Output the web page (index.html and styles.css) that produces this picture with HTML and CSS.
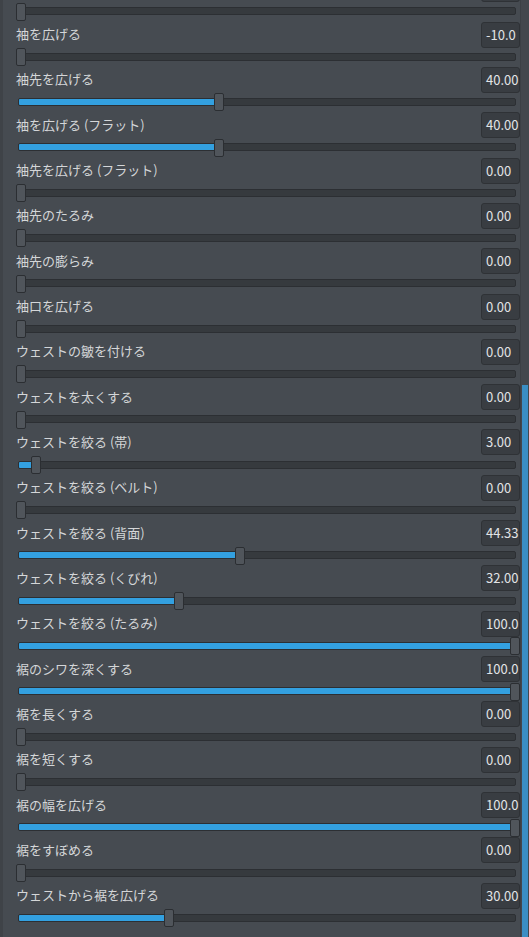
FILE: index.html
```html
<!DOCTYPE html>
<html lang="ja">
<head>
<meta charset="utf-8">
<link rel="stylesheet" href="styles.css">
</head>
<body>
<div class="window">
  <div class="panel">
    <div class="list">
      <div class="row"><div class="head"><span class="label"></span><span class="value"></span></div><div class="slider"><div class="track"><div class="fill" style="width:0px"></div></div><div class="handle" style="left:0px"></div></div></div>
      <div class="row"><div class="head"><span class="label">袖を広げる</span><span class="value">-10.0</span></div><div class="slider"><div class="track"><div class="fill" style="width:0px"></div></div><div class="handle" style="left:0px"></div></div></div>
      <div class="row"><div class="head"><span class="label">袖先を広げる</span><span class="value">40.00</span></div><div class="slider"><div class="track"><div class="fill" style="width:194.6px"></div></div><div class="handle" style="left:197.6px"></div></div></div>
      <div class="row"><div class="head"><span class="label">袖を広げる (フラット)</span><span class="value">40.00</span></div><div class="slider"><div class="track"><div class="fill" style="width:194.6px"></div></div><div class="handle" style="left:197.6px"></div></div></div>
      <div class="row"><div class="head"><span class="label">袖先を広げる (フラット)</span><span class="value">0.00</span></div><div class="slider"><div class="track"><div class="fill" style="width:0px"></div></div><div class="handle" style="left:0px"></div></div></div>
      <div class="row"><div class="head"><span class="label">袖先のたるみ</span><span class="value">0.00</span></div><div class="slider"><div class="track"><div class="fill" style="width:0px"></div></div><div class="handle" style="left:0px"></div></div></div>
      <div class="row"><div class="head"><span class="label">袖先の膨らみ</span><span class="value">0.00</span></div><div class="slider"><div class="track"><div class="fill" style="width:0px"></div></div><div class="handle" style="left:0px"></div></div></div>
      <div class="row"><div class="head"><span class="label">袖口を広げる</span><span class="value">0.00</span></div><div class="slider"><div class="track"><div class="fill" style="width:0px"></div></div><div class="handle" style="left:0px"></div></div></div>
      <div class="row"><div class="head"><span class="label">ウェストの皺を付ける</span><span class="value">0.00</span></div><div class="slider"><div class="track"><div class="fill" style="width:0px"></div></div><div class="handle" style="left:0px"></div></div></div>
      <div class="row"><div class="head"><span class="label">ウェストを太くする</span><span class="value">0.00</span></div><div class="slider"><div class="track"><div class="fill" style="width:0px"></div></div><div class="handle" style="left:0px"></div></div></div>
      <div class="row"><div class="head"><span class="label">ウェストを絞る (帯)</span><span class="value">3.00</span></div><div class="slider"><div class="track"><div class="fill" style="width:11.8px"></div></div><div class="handle" style="left:14.8px"></div></div></div>
      <div class="row"><div class="head"><span class="label">ウェストを絞る (ベルト)</span><span class="value">0.00</span></div><div class="slider"><div class="track"><div class="fill" style="width:0px"></div></div><div class="handle" style="left:0px"></div></div></div>
      <div class="row"><div class="head"><span class="label">ウェストを絞る (背面)</span><span class="value">44.33</span></div><div class="slider"><div class="track"><div class="fill" style="width:216px"></div></div><div class="handle" style="left:219px"></div></div></div>
      <div class="row"><div class="head"><span class="label">ウェストを絞る (くびれ)</span><span class="value">32.00</span></div><div class="slider"><div class="track"><div class="fill" style="width:155px"></div></div><div class="handle" style="left:158px"></div></div></div>
      <div class="row"><div class="head"><span class="label">ウェストを絞る (たるみ)</span><span class="value">100.0</span></div><div class="slider"><div class="track"><div class="fill" style="width:491px"></div></div><div class="handle" style="left:494px"></div></div></div>
      <div class="row"><div class="head"><span class="label">裾のシワを深くする</span><span class="value">100.0</span></div><div class="slider"><div class="track"><div class="fill" style="width:491px"></div></div><div class="handle" style="left:494px"></div></div></div>
      <div class="row"><div class="head"><span class="label">裾を長くする</span><span class="value">0.00</span></div><div class="slider"><div class="track"><div class="fill" style="width:0px"></div></div><div class="handle" style="left:0px"></div></div></div>
      <div class="row"><div class="head"><span class="label">裾を短くする</span><span class="value">0.00</span></div><div class="slider"><div class="track"><div class="fill" style="width:0px"></div></div><div class="handle" style="left:0px"></div></div></div>
      <div class="row"><div class="head"><span class="label">裾の幅を広げる</span><span class="value">100.0</span></div><div class="slider"><div class="track"><div class="fill" style="width:491px"></div></div><div class="handle" style="left:494px"></div></div></div>
      <div class="row"><div class="head"><span class="label">裾をすぼめる</span><span class="value">0.00</span></div><div class="slider"><div class="track"><div class="fill" style="width:0px"></div></div><div class="handle" style="left:0px"></div></div></div>
      <div class="row"><div class="head"><span class="label">ウェストから裾を広げる</span><span class="value">30.00</span></div><div class="slider"><div class="track"><div class="fill" style="width:145px"></div></div><div class="handle" style="left:148.2px"></div></div></div>
    </div>
  </div>
  <div class="scrollbar"><div class="thumb"></div></div>
</div>
</body>
</html>
```

FILE: styles.css
```css
html, body {
  margin: 0;
  padding: 0;
  background: #464b51;
  overflow: hidden;
}
.window {
  display: flex;
  width: 529px;
  height: 937px;
  overflow: hidden;
  font-family: "Noto Sans CJK JP", "Noto Sans", sans-serif;
  font-size: 13px;
  color: #d4d6d8;
}
.panel {
  flex: 1;
  border-left: 3px solid #3f4348;
  overflow: hidden;
}
.list {
  display: flex;
  flex-direction: column;
  margin-top: -24.8px;
}
.row {
  height: 45.33px;
  display: flex;
  flex-direction: column;
  flex: none;
}
.head {
  height: 27px;
  display: flex;
  align-items: center;
  justify-content: space-between;
  padding-left: 13px;
}
.label {
  line-height: 16px;
}
.value {
  box-sizing: border-box;
  width: 39px;
  height: 26px;
  margin-top: 1px;
  background: #393d42;
  border: 1px solid #2f3236;
  border-radius: 3px;
  padding-left: 4px;
  line-height: 24px;
  color: #e2e4e6;
  white-space: nowrap;
  overflow: hidden;
}
.slider {
  position: relative;
  height: 18.33px;
  margin-left: 13px;
  width: 500px;
  display: flex;
  align-items: center;
}
.track {
  box-sizing: border-box;
  margin-left: 2px;
  flex: 1;
  height: 8px;
  background: #363a3e;
  border: 1px solid #2c2f33;
  border-radius: 2px;
  display: flex;
  align-items: center;
  overflow: hidden;
}
.fill {
  flex: none;
  height: 6px;
  background: #33a0e0;
}
.handle {
  position: absolute;
  top: 0.5px;
  box-sizing: border-box;
  width: 10px;
  height: 18px;
  background: #50555b;
  border: 1px solid #2b2e32;
  border-radius: 2px;
}
.scrollbar {
  width: 9px;
  flex: none;
  background: #43474d;
  border-left: 1px solid #3c4045;
  box-sizing: border-box;
  display: flex;
  justify-content: center;
}
.thumb {
  width: 6px;
  margin-top: 385px;
  height: 560px;
  background: #3a8ec4;
}
```
